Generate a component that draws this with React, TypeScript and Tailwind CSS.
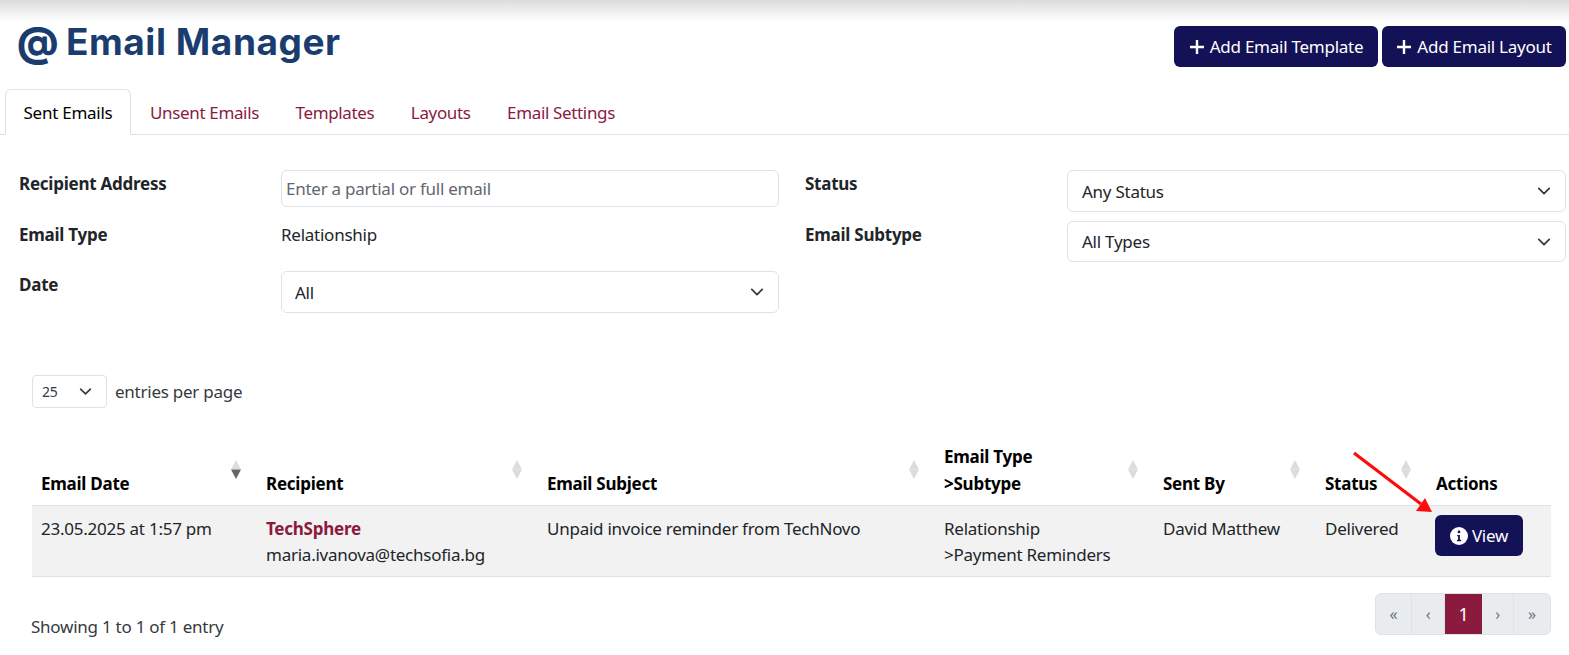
import React from "react";

const font = "font-['Noto_Sans',sans-serif]";

function Chevron({ className = "" }: { className?: string }) {
  return (
    <svg viewBox="0 0 16 16" className={className} fill="none" stroke="#343a40" strokeWidth="2" strokeLinecap="round" strokeLinejoin="round">
      <path d="M2 5l6 6 6-6" />
    </svg>
  );
}

function Select({ label, className = "", labelClass = "" }: { label: string; className?: string; labelClass?: string }) {
  return (
    <div className={`flex items-center justify-between rounded-[6px] border border-[#dee2e6] bg-white pr-[14px] text-[17px] tracking-[-0.25px] text-[#212529] ${className}`}>
      <span className={labelClass}>{label}</span>
      <Chevron className="h-[14px] w-[14px]" />
    </div>
  );
}

function Sort({ active = false }: { active?: boolean }) {
  return (
    <svg viewBox="0 0 10 19" className="absolute right-[16px] top-[17px] h-[19px] w-[10px]">
      <path d="M5 0L10 9.5H0z" fill="#dcdcdc" />
      <path d="M5 19L10 9.5H0z" fill={active ? "#666666" : "#dcdcdc"} />
    </svg>
  );
}

function Th({ children, active, sort = true, className }: { children: React.ReactNode; active?: boolean; sort?: boolean; className: string }) {
  return (
    <th className={`relative border-b border-[#dee2e6] px-[9px] pb-[8px] pt-0 text-left align-bottom font-bold leading-[27px] tracking-[-0.25px] text-black ${className}`}>
      {children}
      {sort && <Sort active={active} />}
    </th>
  );
}

export default function App() {
  const tabs = ["Unsent Emails", "Templates", "Layouts", "Email Settings"];
  return (
    <div className={`relative h-[655px] w-full overflow-hidden bg-white text-[17px] tracking-[-0.25px] text-[#212529] ${font}`}>
      <div className="bg-[linear-gradient(to_bottom,#dcdcdc_0px,#ffffff_22px)]">
        <header className="flex items-start justify-between pl-[17px] pr-[3px] pt-[26px]">
          <h1 className="-mt-[9px] flex items-center gap-[7px] font-['Inter',sans-serif] text-[37px] font-bold leading-[50px] tracking-[0.55px] text-[#1a3c6e]">
            <span className="text-[40px] font-extrabold">@</span>
            <span>Email Manager</span>
          </h1>
          <div className="flex gap-[4px]">
            {[["Add Email Template", "w-[204px]"], ["Add Email Layout", "w-[184px]"]].map(([t, w]) => (
              <button key={t} className={`flex h-[41px] items-center justify-center gap-[5px] rounded-[6px] bg-[#141257] text-[17px] text-white ${w}`}>
                <svg viewBox="0 0 16 16" className="h-[16px] w-[16px]" stroke="white" strokeWidth="2.4">
                  <path d="M8 1v14M1 8h14" />
                </svg>
                {t}
              </button>
            ))}
          </div>
        </header>
      </div>

      <nav className="mt-[22px] flex h-[46px] items-stretch border-b border-[#dee2e6] pl-[5px]">
        <div className="-mb-px flex w-[126px] items-center justify-center rounded-t-[6px] border border-b-white border-[#dee2e6] bg-white pt-[1px] text-black">
          Sent Emails
        </div>
        <div className="flex gap-[36.5px] pl-[19px] tracking-[-0.35px]">
          {tabs.map((t) => (
            <div key={t} className="flex items-center pt-[2px] text-[#8a1a3e]">{t}</div>
          ))}
        </div>
      </nav>

      <section className="mt-[35px] grid grid-cols-[262px_498px_26px_262px_499px] items-start pl-[19px]">
        <label className="pt-[2px] font-bold leading-[24px]">Recipient Address</label>
        <div className="flex h-[37px] items-center rounded-[6px] border border-[#dee2e6] pl-[4px] text-[#5f6770]">Enter a partial or full email</div>
        <div />
        <label className="pt-[2px] font-bold leading-[24px]">Status</label>
        <Select label="Any Status" className="h-[42px] pl-[14px]" labelClass="pt-[2px]" />

        <label className="mt-[9px] pt-[2px] font-bold leading-[24px]">Email Type</label>
        <div className="mt-[9px] pt-[2px] leading-[24px]">Relationship</div>
        <div />
        <label className="mt-[9px] pt-[2px] font-bold leading-[24px]">Email Subtype</label>
        <Select label="All Types" className="mt-[9px] h-[41px] pl-[14px]" />

        <label className="mt-[9px] pt-[2px] font-bold leading-[24px]">Date</label>
        <Select label="All" className="mt-[9px] h-[42px] pl-[13px]" labelClass="pt-[2px]" />
      </section>

      <div className="ml-[32px] mt-[62px] flex items-center gap-[8px]">
        <div className="flex h-[33px] w-[75px] items-center justify-between rounded-[4px] border border-[#dee2e6] pl-[9px] pr-[14px] text-[14px] text-[#343a40]">
          <span>25</span>
          <Chevron className="h-[13px] w-[13px]" />
        </div>
        <span className="text-[#343a40]">entries per page</span>
      </div>

      <table className="ml-[32px] mt-[35px] w-[1519px] table-fixed border-collapse">
        <thead>
          <tr>
            <Th active className="w-[225px]">Email Date</Th>
            <Th className="w-[281px]">Recipient</Th>
            <Th className="w-[397px]">Email Subject</Th>
            <Th className="w-[219px]">Email Type<br />&gt;Subtype</Th>
            <Th className="w-[162px]">Sent By</Th>
            <Th className="w-[111px]">Status</Th>
            <Th sort={false} className="w-[124px]">Actions</Th>
          </tr>
        </thead>
        <tbody>
          <tr className="h-[71px] border-b border-[#dee2e6] bg-[#f2f2f2] align-top leading-[26px] text-[#212529]">
            <td className="px-[9px] pt-[10px]">23.05.2025 at 1:57 pm</td>
            <td className="px-[9px] pt-[10px]">
              <div className="font-bold text-[#8a1a3e]">TechSphere</div>
              <div>maria.ivanova@techsofia.bg</div>
            </td>
            <td className="px-[9px] pt-[10px]">Unpaid invoice reminder from TechNovo</td>
            <td className="px-[9px] pt-[10px]">Relationship<br />&gt;Payment Reminders</td>
            <td className="px-[9px] pt-[10px]">David Matthew</td>
            <td className="px-[9px] pt-[10px]">Delivered</td>
            <td className="pl-[8px] pt-[9px]">
              <button className="flex h-[41px] w-[88px] items-center justify-center gap-[4px] rounded-[6px] bg-[#141257] text-white">
                <svg viewBox="0 0 16 16" className="h-[18px] w-[18px]">
                  <circle cx="8" cy="8" r="8" fill="white" />
                  <path d="M8 3.2a1.2 1.2 0 110 2.4 1.2 1.2 0 010-2.4zM6.4 7h2.4v4.4h1v1.2H6.2v-1.2h1v-3.2h-.8z" fill="#141257" />
                </svg>
                View
              </button>
            </td>
          </tr>
        </tbody>
      </table>

      <footer className="ml-[31px] mr-[18px] mt-[16px] flex items-start justify-between">
        <span className="pt-[22px] leading-[24px] text-[#343a40]">Showing 1 to 1 of 1 entry</span>
        <div className="flex h-[42px] overflow-hidden rounded-[6px] border border-[#dee2e6] bg-[#e9ecef] text-[16px] text-[#6c757d]">
          {[["«", "w-[36px]"], ["‹", "w-[33px]"]].map(([c, w]) => (
            <div key={c} className={`flex items-center justify-center border-r border-[#dee2e6] ${w}`}>{c}</div>
          ))}
          <div className="flex w-[37px] items-center justify-center bg-[#8a1a3e] text-[18px] text-white">1</div>
          {[["›", "w-[32px]"], ["»", "w-[36px]"]].map(([c, w]) => (
            <div key={c} className={`flex items-center justify-center border-r border-[#dee2e6] last:border-r-0 ${w}`}>{c}</div>
          ))}
        </div>
      </footer>

      <svg className="pointer-events-none absolute left-[1345px] top-[445px] h-[80px] w-[95px]" viewBox="0 0 95 80">
        <path d="M9 8L76 59" stroke="#fb0d0d" strokeWidth="3.2" />
        <path d="M87 67L71 66L80 53z" fill="#fb0d0d" />
      </svg>
    </div>
  );
}
